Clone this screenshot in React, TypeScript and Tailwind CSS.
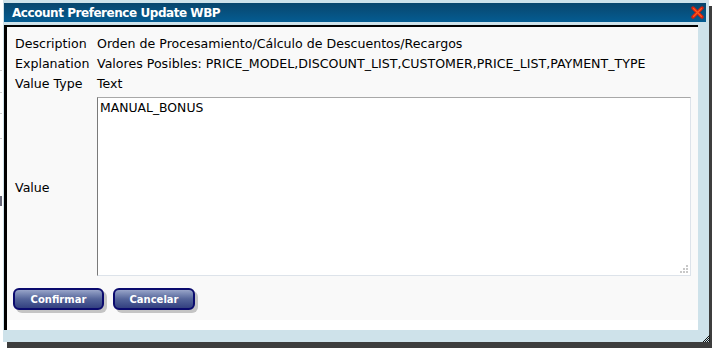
import React from "react";

const font = { fontFamily: '"DejaVu Sans", Verdana, sans-serif' };

function CloseIcon() {
  return (
    <svg width="13" height="13" viewBox="0 0 13 13">
      <path d="M2 2 L11 11 M11 2 L2 11" stroke="#d8200c" strokeWidth="3.4" strokeLinecap="round" />
      <path d="M2.5 2.5 L10.5 10.5 M10.5 2.5 L2.5 10.5" stroke="#ff5a1e" strokeWidth="1.2" strokeLinecap="round" />
    </svg>
  );
}

function Grip() {
  return (
    <svg width="10" height="10" viewBox="0 0 10 10" className="absolute right-[2px] bottom-[2px]">
      {[
        [7, 1],
        [4, 4],
        [7, 4],
        [1, 7],
        [4, 7],
        [7, 7],
      ].map(([x, y], i) => (
        <rect key={i} x={x} y={y} width="2" height="2" fill="#c8c8c8" />
      ))}
    </svg>
  );
}

function Button({ label, width }: { label: string; width: string }) {
  return (
    <div className="relative">
      <div className={`absolute left-[3px] top-[3px] h-[22px] rounded-[6px] bg-[#c4c4c4] ${width}`} />
      <div
        className={`relative h-[22px] rounded-[6px] border-2 border-[#0b0b6e] bg-gradient-to-b from-[#98a4c8] via-[#55659a] to-[#334080] flex items-center justify-center text-white font-bold text-[10px] ${width}`}
      >
        {label}
      </div>
    </div>
  );
}

function Row({ label, children }: { label: string; children: React.ReactNode }) {
  return (
    <div className="flex h-[20px] items-center">
      <div className="w-[82px] shrink-0">{label}</div>
      <div className="whitespace-nowrap">{children}</div>
    </div>
  );
}

export default function App() {
  return (
    <div className="relative w-[712px] h-[348px] overflow-hidden bg-white" style={font}>
      {/* page behind */}
      <div className="absolute left-0 top-0 w-[3px] h-full overflow-hidden bg-white">
        <div className="absolute left-0 top-[70px] w-[2px] h-[1px] bg-[#ccc]" />
        <div className="absolute left-0 top-[92px] w-[2px] h-[1px] bg-[#ccc]" />
        <div className="absolute left-0 top-[113px] w-[2px] h-[1px] bg-[#ccc]" />
        <div className="absolute left-0 top-[138px] w-[2px] h-[1px] bg-[#ccc]" />
        <div className="absolute left-0 top-[196px] w-[2px] h-[10px] bg-[#667]" />
      </div>
      {/* dialog shadow */}
      <div className="absolute left-[7px] top-[6px] right-0 bottom-0 bg-[#3d3d3d]" />
      {/* dialog */}
      <div className="absolute left-[3px] top-0 w-[706px] h-[342px] bg-[#cee2ea] pt-[3px] pl-[1px] pr-[3px] flex flex-col">
        <div className="h-[19px] bg-gradient-to-b from-[#08466d] to-[#045c92] flex items-center justify-between pl-[8px] pr-[2px]">
          <span className="text-white font-bold text-[12px] tracking-[-0.45px]">Account Preference Update WBP</span>
          <CloseIcon />
        </div>
        <div className="mt-[3px] mr-[8px] h-[305px] border-t-2 border-l-[3px] border-black bg-white flex flex-col">
          <div className="h-[293px] bg-[#f9f9f9] pl-[8px] pt-[7px] text-[12.6px] text-black">
            <Row label="Description">Orden de Procesamiento/Cálculo de Descuentos/Recargos</Row>
            <Row label="Explanation">Valores Posibles: PRICE_MODEL,DISCOUNT_LIST,CUSTOMER,PRICE_LIST,PAYMENT_TYPE</Row>
            <Row label="Value Type">Text</Row>
            <div className="flex mt-[3px]">
              <div className="w-[82px] shrink-0 flex items-center pt-[3px]">Value</div>
              <div className="relative">
                <textarea
                  readOnly
                  defaultValue="MANUAL_BONUS"
                  className="block w-[594px] h-[179px] resize-none bg-white border border-[#dde3ea] border-l-[#7a7a7a] border-t-[#a8a8a8] px-[2px] py-[1px] text-[12.4px] text-black outline-none"
                  style={font}
                />
                <Grip />
              </div>
            </div>
            <div className="flex gap-[9px] mt-[12px] ml-[-2px]">
              <Button label="Confirmar" width="w-[91px]" />
              <Button label="Cancelar" width="w-[82px]" />
            </div>
          </div>
        </div>
      </div>
      {/* dialog resize grip */}
      <svg width="7" height="7" viewBox="0 0 7 7" className="absolute left-[703px] top-[335px]">
        {[0, 1, 2, 3, 4, 5, 6].map((i) =>
          Array.from({ length: i + 1 }).map((_, j) =>
            (i + j) % 2 === 0 ? <rect key={`${i}-${j}`} x={6 - j} y={i} width="1" height="1" fill="#111" /> : null
          )
        )}
      </svg>
    </div>
  );
}
